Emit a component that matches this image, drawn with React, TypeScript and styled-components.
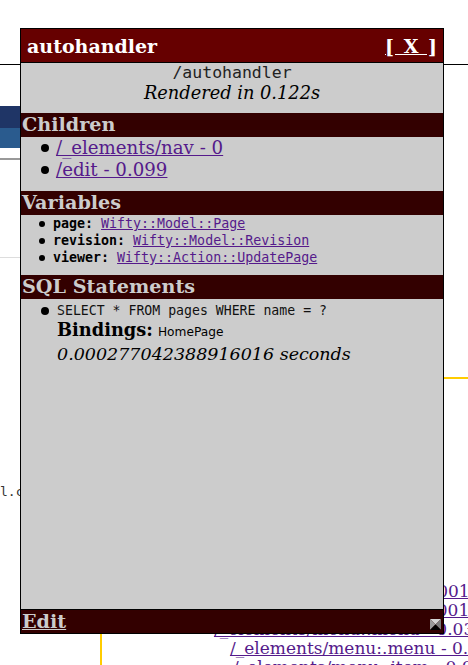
import * as React from 'react';
import styled, { createGlobalStyle } from 'styled-components';

const SERIF = `"DejaVu Serif", "Liberation Serif", serif`;
const MONO = `"DejaVu Sans Mono", "Liberation Mono", monospace`;
const SANS = `"DejaVu Sans", "Liberation Sans", sans-serif`;

const GlobalStyle = createGlobalStyle`
    html, body {
        margin: 0;
        padding: 0;
        background: #FFFFFF;
        overflow: hidden;
    }
    body {
        font-family: ${SERIF};
        color: #000000;
    }
`

/* ---------- page behind the popup ---------- */

const Page = styled.div`
    position: relative;
    width: 468px;
    height: 665px;
    overflow: hidden;
    display: flex;
    flex-direction: column;
`

const Masthead = styled.div`
    height: 64px;
    flex-shrink: 0;
    border-bottom: 1px solid #000000;
`

const Logo = styled.div`
    margin-top: 41px;
    width: 160px;
    height: 42px;
    flex-shrink: 0;
    background: linear-gradient(#1f3566 0 22px, #2a5b8e 22px 100%);
`

const Rule = styled.div<{ color: string; thick: number; gap: number }>`
    margin-top: ${p => p.gap}px;
    height: ${p => p.thick}px;
    width: 300px;
    flex-shrink: 0;
    background: ${p => p.color};
`

const ContentRow = styled.div`
    margin-top: 119px;
    display: flex;
    flex: 1;
`

const Sidebar = styled.div`
    width: 100px;
    flex-shrink: 0;
    padding-top: 107px;
    font-family: ${MONO};
    font-size: 13px;
    line-height: 16px;
    color: #333333;
`

const Main = styled.div`
    flex: 1;
    border-top: 2px solid #ffcc00;
    border-left: 2px solid #ffcc00;
    padding-top: 203px;
    white-space: nowrap;
`

const TreeLine = styled.div<{ indent: number }>`
    padding-left: ${p => p.indent}px;
    font-family: ${SERIF};
    font-size: 17px;
    line-height: 19px;
`

const PageLink = styled.a`
    color: #551a8b;
    text-decoration: underline;
`

/* ---------- the debug popup ---------- */

const Popup = styled.div`
    position: absolute;
    left: 20px;
    top: 28px;
    width: 422px;
    height: 604px;
    border: 1px solid #000000;
    background: #cccccc;
    display: flex;
    flex-direction: column;
    font-family: ${SERIF};
`

const TitleBar = styled.div`
    height: 33px;
    flex-shrink: 0;
    border-bottom: 1px solid #000000;
    background: #660000;
    display: flex;
    align-items: center;
    justify-content: space-between;
    padding: 0 6px 0 6px;
`

const Title = styled.div`
    color: #ffffff;
    font-size: 19px;
    font-weight: bold;
`

const CloseLink = styled.a`
    color: #ffffff;
    font-size: 19px;
    font-weight: bold;
    text-decoration: underline;
    word-spacing: 3px;
`

const Info = styled.div`
    height: 50px;
    flex-shrink: 0;
    text-align: center;
`

const Path = styled.div`
    font-family: ${MONO};
    font-size: 16.5px;
    line-height: 19px;
    color: #222222;
`

const Timing = styled.div`
    font-style: italic;
    font-size: 17.8px;
    line-height: 21px;
`

const SectionTitle = styled.h2`
    margin: 0;
    height: 24px;
    flex-shrink: 0;
    background: #330000;
    color: #cccccc;
    font-size: 19.2px;
    font-weight: bold;
    line-height: 24px;
    padding-left: 1px;
`

const List = styled.ul<{ pad: string }>`
    list-style: none;
    margin: 0;
    padding: ${p => p.pad};
    flex-shrink: 0;
`

const Item = styled.li<{ indent: number; gap: number; lh: number }>`
    display: flex;
    align-items: center;
    gap: ${p => p.gap}px;
    padding-left: ${p => p.indent}px;
    line-height: ${p => p.lh}px;
    white-space: nowrap;
`

const Dot = styled.span<{ size: number }>`
    width: ${p => p.size}px;
    height: ${p => p.size}px;
    border-radius: 50%;
    background: #000000;
    flex-shrink: 0;
`

const ChildLink = styled.a`
    font-size: 18.2px;
    color: #551a8b;
    text-decoration: underline;
`

const VarText = styled.span`
    font-family: ${MONO};
    font-size: 13.3px;
`

const VarName = styled.b`
    font-weight: bold;
    color: #000000;
`

const VarLink = styled.a`
    color: #551a8b;
    text-decoration: underline;
`

const Query = styled.span`
    font-family: ${MONO};
    font-size: 13.2px;
    color: #111111;
`

const QueryDetail = styled.div`
    padding-left: 36px;
    line-height: 22px;
    white-space: nowrap;
`

const BindLabel = styled.b`
    font-size: 17.8px;
    font-weight: bold;
`

const BindValue = styled.span`
    font-family: ${SANS};
    font-size: 12.2px;
`

const Seconds = styled.div`
    padding-left: 36px;
    font-style: italic;
    font-size: 17.5px;
    line-height: 22px;
`

const Spacer = styled.div`
    flex: 1;
`

const Footer = styled.div`
    height: 23px;
    flex-shrink: 0;
    border-top: 1px solid #000000;
    background: #330000;
    display: flex;
    align-items: center;
    justify-content: space-between;
`

const EditLink = styled.a`
    color: #cccccc;
    font-size: 19.2px;
    font-weight: bold;
    text-decoration: underline;
    padding-left: 1px;
`

const Grip = styled.svg`
    align-self: flex-end;
    margin: 0 2px 3px 0;
`

const children = ['/_elements/nav - 0', '/edit - 0.099']

const variables = [
    { name: 'page', value: 'Wifty::Model::Page' },
    { name: 'revision', value: 'Wifty::Model::Revision' },
    { name: 'viewer', value: 'Wifty::Action::UpdatePage' },
]

const tree = [
    { indent: 144, text: '/_elements/header - 0.001' },
    { indent: 144, text: '/_elements/navbar - 0.001' },
    { indent: 112, text: '/_elements/menu::menu - 0.033' },
    { indent: 128, text: '/_elements/menu:.menu - 0.004' },
    { indent: 131, text: '/_elements/menu:.item - 0.002' },
]

export default function App() {
    return (
        <React.Fragment>
            <GlobalStyle />
            <Page>
                <Masthead />
                <Logo />
                <Rule color="#999999" thick={2} gap={10} />
                <Rule color="#dddddd" thick={1} gap={97} />
                <ContentRow>
                    <Sidebar>l.c</Sidebar>
                    <Main>
                        {tree.map(t => (
                            <TreeLine key={t.text} indent={t.indent}>
                                <PageLink href="#">{t.text}</PageLink>
                            </TreeLine>
                        ))}
                    </Main>
                </ContentRow>

                <Popup>
                    <TitleBar>
                        <Title>autohandler</Title>
                        <CloseLink href="#">[ X ]</CloseLink>
                    </TitleBar>

                    <Info>
                        <Path>/autohandler</Path>
                        <Timing>Rendered in 0.122s</Timing>
                    </Info>

                    <SectionTitle>Children</SectionTitle>
                    <List pad="0 0 10px">
                        {children.map(c => (
                            <Item key={c} indent={20} gap={7} lh={22}>
                                <Dot size={8} />
                                <ChildLink href="#">{c}</ChildLink>
                            </Item>
                        ))}
                    </List>

                    <SectionTitle>Variables</SectionTitle>
                    <List pad="0 0 9px">
                        {variables.map(v => (
                            <Item key={v.name} indent={18} gap={8} lh={17}>
                                <Dot size={6} />
                                <VarText>
                                    <VarName>{v.name}:</VarName>{' '}
                                    <VarLink href="#">{v.value}</VarLink>
                                </VarText>
                            </Item>
                        ))}
                    </List>

                    <SectionTitle>SQL Statements</SectionTitle>
                    <List pad="3px 0 0">
                        <li>
                            <Item as="div" indent={20} gap={8} lh={17}>
                                <Dot size={8} />
                                <Query>SELECT * FROM pages WHERE name = ?</Query>
                            </Item>
                            <QueryDetail>
                                <BindLabel>Bindings:</BindLabel>{' '}
                                <BindValue>HomePage</BindValue>
                            </QueryDetail>
                            <Seconds>0.000277042388916016 seconds</Seconds>
                        </li>
                    </List>

                    <Spacer />

                    <Footer>
                        <EditLink href="#">Edit</EditLink>
                        <Grip width="11" height="11" viewBox="0 0 11 11">
                            <polygon points="0,0 11,0 5.5,5.5" fill="#d4d4d4" />
                            <polygon points="0,0 5.5,5.5 0,11" fill="#9a9a9a" />
                            <polygon points="11,0 11,11 5.5,5.5" fill="#7a7a7a" />
                            <polygon points="0,11 5.5,5.5 11,11" fill="#000000" />
                        </Grip>
                    </Footer>
                </Popup>
            </Page>
        </React.Fragment>
    )
}
